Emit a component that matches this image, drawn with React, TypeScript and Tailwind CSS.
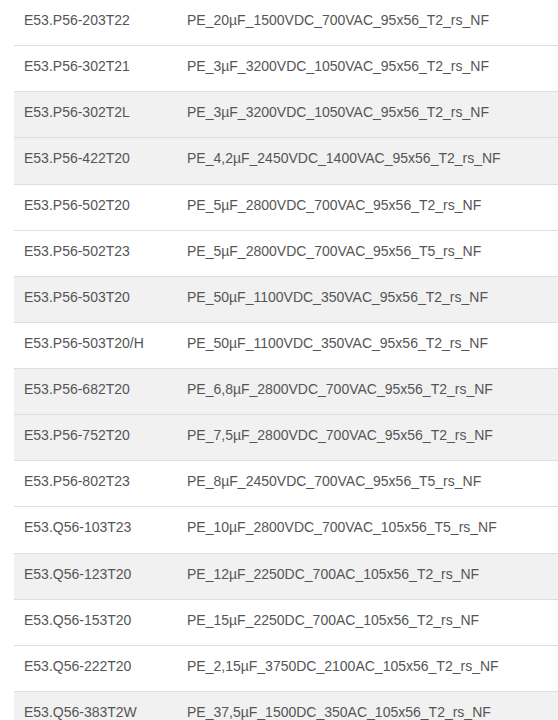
const rows: [string, string, boolean][] = [
  ["E53.P56-203T22", "PE_20µF_1500VDC_700VAC_95x56_T2_rs_NF", false],
  ["E53.P56-302T21", "PE_3µF_3200VDC_1050VAC_95x56_T2_rs_NF", false],
  ["E53.P56-302T2L", "PE_3µF_3200VDC_1050VAC_95x56_T2_rs_NF", true],
  ["E53.P56-422T20", "PE_4,2µF_2450VDC_1400VAC_95x56_T2_rs_NF", true],
  ["E53.P56-502T20", "PE_5µF_2800VDC_700VAC_95x56_T2_rs_NF", false],
  ["E53.P56-502T23", "PE_5µF_2800VDC_700VAC_95x56_T5_rs_NF", false],
  ["E53.P56-503T20", "PE_50µF_1100VDC_350VAC_95x56_T2_rs_NF", true],
  ["E53.P56-503T20/H", "PE_50µF_1100VDC_350VAC_95x56_T2_rs_NF", false],
  ["E53.P56-682T20", "PE_6,8µF_2800VDC_700VAC_95x56_T2_rs_NF", true],
  ["E53.P56-752T20", "PE_7,5µF_2800VDC_700VAC_95x56_T2_rs_NF", true],
  ["E53.P56-802T23", "PE_8µF_2450VDC_700VAC_95x56_T5_rs_NF", false],
  ["E53.Q56-103T23", "PE_10µF_2800VDC_700VAC_105x56_T5_rs_NF", false],
  ["E53.Q56-123T20", "PE_12µF_2250DC_700AC_105x56_T2_rs_NF", true],
  ["E53.Q56-153T20", "PE_15µF_2250DC_700AC_105x56_T2_rs_NF", false],
  ["E53.Q56-222T20", "PE_2,15µF_3750DC_2100AC_105x56_T2_rs_NF", false],
  ["E53.Q56-383T2W", "PE_37,5µF_1500DC_350AC_105x56_T2_rs_NF", true],
];

export default function App() {
  return (
    <div className="h-[720px] overflow-hidden bg-white pl-[14px] font-['Liberation_Sans',Arial,sans-serif] text-[14px] text-[#555]">
      {rows.map(([code, name, shade]) => (
        <div
          key={code}
          className={`flex h-[46.14px] border-b border-[#dddddd] pt-[10px] leading-[20px] ${shade ? "bg-[#f1f1f1]" : "bg-white"}`}
        >
          <div className="w-[173px] shrink-0 pl-[10px]">{code}</div>
          <div className="whitespace-nowrap">{name}</div>
        </div>
      ))}
    </div>
  );
}
